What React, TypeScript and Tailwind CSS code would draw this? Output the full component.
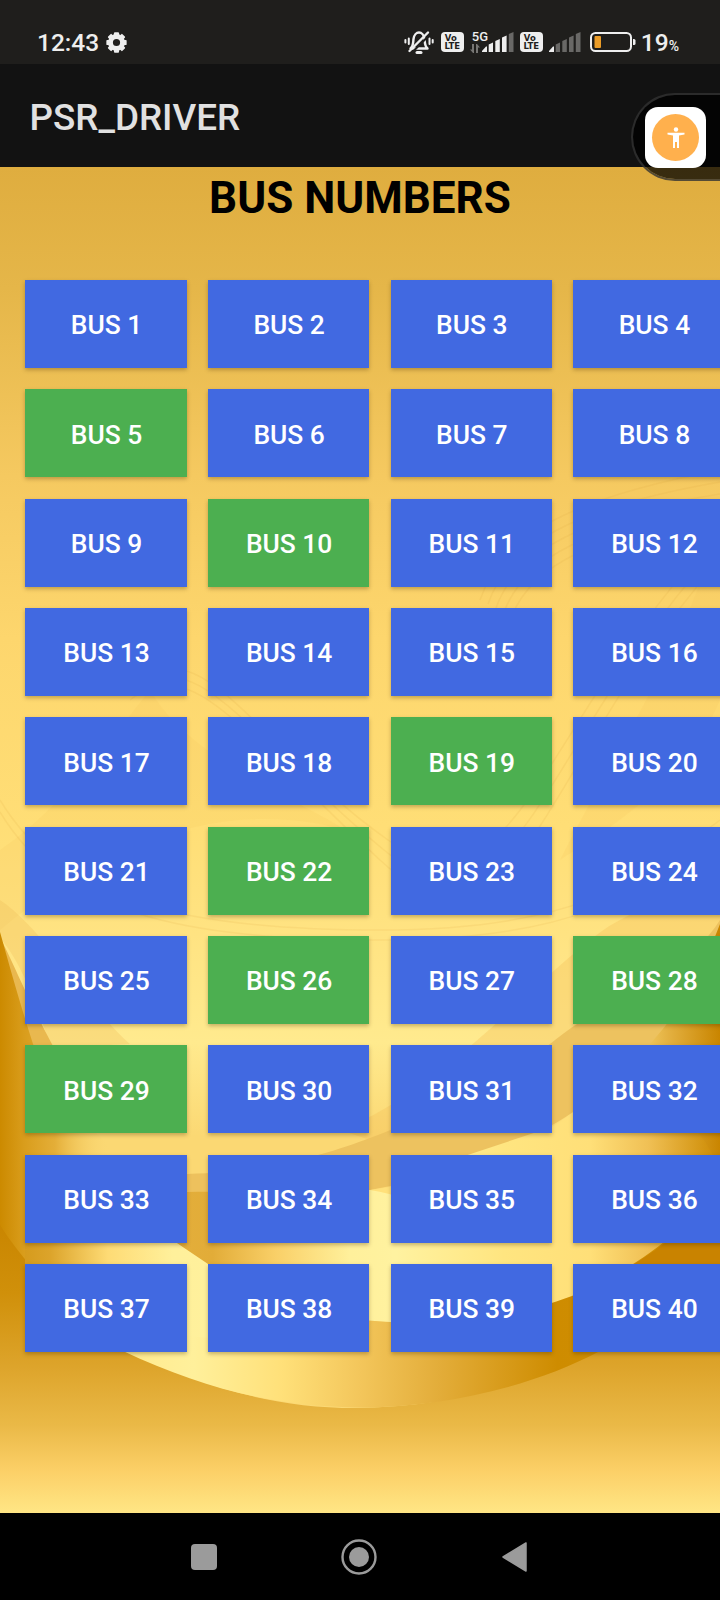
import React from "react";

const ACTIVE = new Set([5, 10, 19, 22, 26, 28, 29]);
const BUSES = Array.from({ length: 40 }, (_, i) => i + 1);

function GoldBackdrop() {
  return (
    <svg
      className="absolute inset-0 h-full w-full"
      viewBox="0 167 720 1346"
      preserveAspectRatio="none"
      aria-hidden="true"
    >
      <defs>
        <linearGradient id="base" gradientUnits="userSpaceOnUse" x1="0" y1="167" x2="0" y2="1513">
          <stop offset="0" stopColor="#dfad3f" />
          <stop offset="0.09" stopColor="#e5b649" />
          <stop offset="0.23" stopColor="#f5c960" />
          <stop offset="0.35" stopColor="#fdd66d" />
          <stop offset="0.49" stopColor="#ffde76" />
          <stop offset="0.57" stopColor="#ffe382" />
          <stop offset="0.65" stopColor="#ffea8e" />
          <stop offset="0.72" stopColor="#fbd873" />
          <stop offset="1" stopColor="#fbd873" />
        </linearGradient>
        <linearGradient id="floor" gradientUnits="userSpaceOnUse" x1="0" y1="1220" x2="0" y2="1513">
          <stop offset="0" stopColor="#c98500" />
          <stop offset="0.25" stopColor="#d0900a" />
          <stop offset="0.5" stopColor="#dda42b" />
          <stop offset="0.7" stopColor="#eab947" />
          <stop offset="0.86" stopColor="#fcd068" />
          <stop offset="1" stopColor="#ffe685" />
        </linearGradient>
        <linearGradient id="leftFold" gradientUnits="userSpaceOnUse" x1="0" y1="0" x2="110" y2="0">
          <stop offset="0" stopColor="#cc8a00" />
          <stop offset="0.22" stopColor="#d99d1c" />
          <stop offset="0.5" stopColor="#e4ae38" />
          <stop offset="1" stopColor="#fbd873" stopOpacity="0" />
        </linearGradient>
        <linearGradient id="rightFold" gradientUnits="userSpaceOnUse" x1="560" y1="0" x2="720" y2="0">
          <stop offset="0" stopColor="#ffe07a" />
          <stop offset="0.38" stopColor="#ffe17d" />
          <stop offset="0.68" stopColor="#e3b040" />
          <stop offset="1" stopColor="#c98500" />
        </linearGradient>
        <linearGradient id="upperRibbon" gradientUnits="userSpaceOnUse" x1="0" y1="0" x2="720" y2="0">
          <stop offset="0" stopColor="#d0920f" />
          <stop offset="0.07" stopColor="#dca42b" />
          <stop offset="0.15" stopColor="#fedb75" />
          <stop offset="0.24" stopColor="#fff09b" />
          <stop offset="0.55" stopColor="#fff2a0" />
          <stop offset="0.7" stopColor="#ffe580" />
          <stop offset="0.82" stopColor="#ffdf78" />
          <stop offset="0.9" stopColor="#f0c055" />
          <stop offset="1" stopColor="#cc8900" />
        </linearGradient>
        <linearGradient id="innerRibbon" gradientUnits="userSpaceOnUse" x1="150" y1="0" x2="400" y2="0">
          <stop offset="0" stopColor="#e4b03d" />
          <stop offset="0.25" stopColor="#e2ac38" />
          <stop offset="0.5" stopColor="#f9cf67" />
          <stop offset="0.8" stopColor="#fff09b" />
          <stop offset="1" stopColor="#fff2a0" />
        </linearGradient>
        <linearGradient id="lowerRibbon" gradientUnits="userSpaceOnUse" x1="100" y1="0" x2="620" y2="0">
          <stop offset="0" stopColor="#ffe88a" />
          <stop offset="0.18" stopColor="#fff09b" />
          <stop offset="0.35" stopColor="#ffe079" />
          <stop offset="0.5" stopColor="#f3c65b" />
          <stop offset="0.65" stopColor="#e3ad3a" />
          <stop offset="0.88" stopColor="#ce8c00" />
          <stop offset="1" stopColor="#cf8e04" />
        </linearGradient>
      </defs>

      <rect x="0" y="167" width="720" height="1346" fill="url(#base)" />

      <path d="M720 520 C690 640 610 760 560 860 C640 810 690 770 720 700 Z" fill="#f3bd55" opacity="0.14" />
      <path d="M0 850 C60 810 110 740 150 690 C190 760 300 800 345 830 C240 800 120 830 0 930 Z" fill="#f0bb50" opacity="0.12" />
      <path d="M0 900 C45 930 90 1010 130 1044 L50 1048 C40 1010 20 960 0 938 Z" fill="#eebc58" opacity="0.3" />

      <g fill="none" stroke="#d9a23a" strokeOpacity="0.13" strokeWidth="1.500">
        <path d="M480 600 C500 540 560 500 720 470" />
        <path d="M488 604 C508 546 570 508 720 482" />
        <path d="M496 608 C516 552 580 516 720 494" />
        <path d="M504 612 C524 558 590 524 720 506" />
        <path d="M512 616 C532 564 600 532 720 518" />
        <path d="M130 700 C190 650 240 730 380 860 S540 760 720 560" />
        <path d="M134 690 C198 640 250 740 384 850 S540 740 720 546" />
        <path d="M138 680 C206 630 260 750 388 840 S540 720 720 532" />
        <path d="M0 800 C60 900 180 930 380 930 S640 880 720 820" />
        <path d="M0 812 C60 912 180 940 380 940 S640 892 720 832" />
      </g>

      <path d="M340 1130 C450 1090 560 950 620 920 C670 895 700 870 720 840 L720 935 C690 990 600 1040 555 1045 C500 1090 430 1120 370 1140 Z" fill="#f3bf59" opacity="0.35" />

      <path d="M187 1174 C270 1172 330 1153 370 1138 C460 1105 525 1064 555 1040 C610 996 690 970 720 920 L720 1020 C690 1070 620 1095 573 1112 C520 1148 450 1175 370 1190 L187 1194 Z" fill="#edc25f" />

      <path d="M720 924 C700 975 685 1005 650 1044 C620 1078 590 1102 552 1127 C500 1158 440 1180 370 1190 L370 1250 L720 1250 Z" fill="url(#rightFold)" />

      <path d="M0 938 C10 955 28 1000 54 1048 L30 1048 C18 1005 10 970 0 938 Z" fill="#e9b84f" />
      <path d="M0 932 C12 975 22 1010 33 1044 C60 1100 100 1150 160 1174 L160 1270 L0 1270 Z" fill="url(#leftFold)" />
      <path d="M100 1190 C130 1186 160 1174 208 1174 C260 1176 310 1160 370 1180 L370 1300 L100 1250 Z" fill="#edc15d" />

      <path d="M0 1225 C60 1320 190 1408 355 1408 C500 1408 640 1345 720 1240 L720 1513 L0 1513 Z" fill="url(#floor)" />
      <path d="M25 1268 L25 1220 C60 1195 100 1205 170 1240 C260 1290 400 1190 552 1127 C640 1080 690 1100 720 1170 L720 1200 C670 1250 620 1280 552 1303 C490 1322 420 1325 355 1320 L250 1385 C130 1370 60 1320 25 1268 Z" fill="url(#upperRibbon)" />
      <path d="M0 1225 L0 1513 L120 1513 L123 1351 C70 1325 35 1290 0 1225 Z" fill="url(#floor)" />
      <path d="M120 1195 C150 1225 185 1250 208 1265 C270 1300 320 1318 372 1321 C440 1326 505 1320 552 1303 C500 1260 440 1200 370 1190 C310 1196 260 1191 187 1192 Z" fill="url(#innerRibbon)" />
      <path d="M392 1180 L552 1127 L552 1303 L392 1303 Z" fill="url(#upperRibbon)" />
      <path d="M207 1264 C260 1298 320 1318 375 1321 C440 1326 510 1320 572 1296 C640 1268 690 1225 720 1185 L720 1260 C680 1300 640 1330 600 1351 C530 1388 440 1408 355 1407.500 C270 1406 200 1387 123 1351 L180 1300 Z" fill="url(#lowerRibbon)" />
      <path d="M100 1235 L165 1235 L208 1264 L240 1285 L240 1340 L100 1330 Z" fill="url(#upperRibbon)" />
      <path d="M578 1294 C600 1286 640 1262 665 1243 C690 1224 708 1205 720 1185 L720 1264 L610 1345 L578 1330 Z" fill="#c98300" />
    </svg>
  );
}

function GearIcon() {
  return (
    <svg className="ml-[7px] h-[21px] w-[21px]" viewBox="-12 -12 24 24">
      <circle r="6.900" fill="none" stroke="#eee" strokeWidth="5.600" />
      <g fill="#eee">
        <rect x="-2.900" y="-11.600" width="5.800" height="4" rx="1" />
        <rect x="-2.900" y="-11.600" width="5.800" height="4" rx="1" transform="rotate(45)" />
        <rect x="-2.900" y="-11.600" width="5.800" height="4" rx="1" transform="rotate(90)" />
        <rect x="-2.900" y="-11.600" width="5.800" height="4" rx="1" transform="rotate(135)" />
        <rect x="-2.900" y="-11.600" width="5.800" height="4" rx="1" transform="rotate(180)" />
        <rect x="-2.900" y="-11.600" width="5.800" height="4" rx="1" transform="rotate(225)" />
        <rect x="-2.900" y="-11.600" width="5.800" height="4" rx="1" transform="rotate(270)" />
        <rect x="-2.900" y="-11.600" width="5.800" height="4" rx="1" transform="rotate(315)" />
      </g>
    </svg>
  );
}

function MutedBell() {
  return (
    <svg className="h-[28px] w-[30px]" viewBox="0 0 30 28" fill="none" stroke="#eee" strokeLinecap="round">
      <path d="M6.500 20.500 H23.500 C20.500 18 21 15 20.500 11 C20 7 17.500 4.500 15 4.500 C12.500 4.500 10 7 9.500 11 C9 15 9.500 18 6.500 20.500 Z" strokeWidth="2.400" strokeLinejoin="round" />
      <path d="M13 24.500 H17" strokeWidth="3" />
      <path d="M4.800 10.500 V16 M25.500 10.500 V16" strokeWidth="2" />
      <path d="M1.400 12 V14.500 M28.700 12 V14.500" strokeWidth="2" />
      <path d="M8 24.500 L26 6.500" stroke="#1f1e1c" strokeWidth="2" />
      <path d="M5.500 23 L24 4.500" strokeWidth="2.400" />
    </svg>
  );
}

function VoLte() {
  return (
    <div className="flex h-5 w-[23px] flex-col items-center justify-center rounded-[4px] bg-[#eee] font-['DejaVu_Sans',sans-serif] text-[8.500px] leading-[8px] font-bold text-[#1f1e1c]">
      <span className="-ml-[3px]">Vo</span>
      <span>LTE</span>
    </div>
  );
}

function Bars({ lit }: { lit: number }) {
  const fill = (i: number) => (i < lit ? "#eee" : "#696866");
  return (
    <svg className="h-5 w-[32px]" viewBox="0 0 32 20">
      <path d="M0 19 L4 14.500 H5 V20 H0 Z" fill={fill(0)} />
      <path d="M6.700 12.500 L11 10.500 V20 H6.700 Z" fill={fill(1)} />
      <path d="M13.300 9 L17.800 7 V20 H13.300 Z" fill={fill(2)} />
      <path d="M20 5.500 L24.600 3.500 V20 H20 Z" fill={fill(3)} />
      <path d="M26.800 2 L31.500 0 V20 H26.800 Z" fill={fill(4)} />
    </svg>
  );
}

function StatusBar() {
  return (
    <div className="flex h-16 shrink-0 items-center bg-[#1f1e1c] pt-5 pl-[37px] text-[#eee]">
      <span className="relative top-px text-[24.500px] leading-none font-medium">12:43</span>
      <GearIcon />
      <div className="ml-auto flex items-center pr-[41px]">
        <MutedBell />
        <div className="ml-[7px]"><VoLte /></div>
        <div className="relative ml-[18px]">
          <span className="absolute -top-[2px] -left-[10px] text-[13px] leading-none font-medium">5G</span>
          <svg className="absolute top-[12px] -left-[12px] h-[9px] w-[10px]" viewBox="0 0 10 9" fill="#777674">
            <path d="M2 0 H4 V9 H3 L0 5.500 H2 Z M6 0 H7 L10 3.500 H8 V9 H6 Z" />
          </svg>
          <Bars lit={4} />
        </div>
        <div className="ml-[6px]"><VoLte /></div>
        <div className="ml-[6px]"><Bars lit={1} /></div>
        <svg className="ml-[9px] h-5 w-[46px]" viewBox="0 0 46 20">
          <rect x="1" y="1" width="40" height="18" rx="4.500" fill="none" stroke="#eee" strokeWidth="2" />
          <rect x="4.500" y="4" width="6.500" height="12" rx="1" fill="#eb9c27" />
          <path d="M43 7 h1 q1.500 0 1.500 1.500 v3 q0 1.500 -1.500 1.500 h-1 z" fill="#eee" />
        </svg>
        <div className="relative top-px ml-[5px] flex items-baseline">
          <span className="text-[24.500px] leading-none font-medium">19</span>
          <span className="text-[14px] leading-none font-medium">%</span>
        </div>
      </div>
    </div>
  );
}

function FloatingTool() {
  return (
    <div className="absolute top-[93px] right-0 flex h-[88px] w-[89px] items-start rounded-l-[44px] border-2 border-r-0 border-[#333]/80 bg-black/75 bg-clip-padding pt-3 pl-3">
      <div className="flex h-[61px] w-[61px] items-center justify-center rounded-[13px] bg-white">
        <div className="flex h-[47px] w-[47px] items-center justify-center rounded-full bg-[#ffb04d]">
          <svg className="h-[22px] w-[18px]" viewBox="0 0 18 22" fill="white">
            <circle cx="9" cy="2.500" r="2.200" />
            <path d="M0.500 5.800 H17.500 V7.600 L12 8.400 V21 H10 V15 H8 V21 H6 V8.400 L0.500 7.600 Z" />
          </svg>
        </div>
      </div>
    </div>
  );
}

export default function App() {
  return (
    <div className="relative flex h-[1600px] w-[720px] flex-col overflow-hidden bg-black font-['Roboto',sans-serif]">
      <StatusBar />
      <header className="flex h-[103px] shrink-0 items-center bg-[#121212] pt-[5px] pl-[29.500px] text-[36.800px] font-medium text-[#e1e1e1]">
        PSR_DRIVER
      </header>
      <main className="relative h-[1346px] shrink-0 overflow-hidden">
        <GoldBackdrop />
        <div className="relative">
          <h1 className="h-[113px] pt-[5px] text-center text-[44px] leading-[52px] font-bold text-black">BUS NUMBERS</h1>
          <div className="ml-[25.300px] grid w-max grid-cols-[repeat(4,161.330px)] gap-[21.330px]">
            {BUSES.map((n) => (
              <button
                key={n}
                className={`flex h-[88px] items-center justify-center pt-[3px] pl-px text-[26.400px] leading-none font-medium text-white shadow-[0_2px_4px_rgba(60,40,0,0.3)] ${
                  ACTIVE.has(n) ? "bg-[#4caf50]" : "bg-[#4169e1]"
                }`}
              >
                BUS {n}
              </button>
            ))}
          </div>
        </div>
      </main>
      <nav className="flex h-[87px] shrink-0 items-center bg-black pl-[191px]">
        <svg className="h-[26px] w-[26px]" viewBox="0 0 26 26"><rect width="26" height="26" rx="4" fill="#9b9b9b" /></svg>
        <svg className="ml-[124px] h-[36px] w-[36px]" viewBox="0 0 36 36">
          <circle cx="18" cy="18" r="16.500" fill="none" stroke="#9b9b9b" strokeWidth="2.400" />
          <circle cx="18" cy="18" r="10" fill="#9b9b9b" />
        </svg>
        <svg className="ml-[125px] h-[30px] w-[25px]" viewBox="0 0 25 30">
          <path d="M1 15 L24 1 V29 Z" fill="#9b9b9b" stroke="#9b9b9b" strokeWidth="1.500" strokeLinejoin="round" />
        </svg>
      </nav>
      <FloatingTool />
    </div>
  );
}
